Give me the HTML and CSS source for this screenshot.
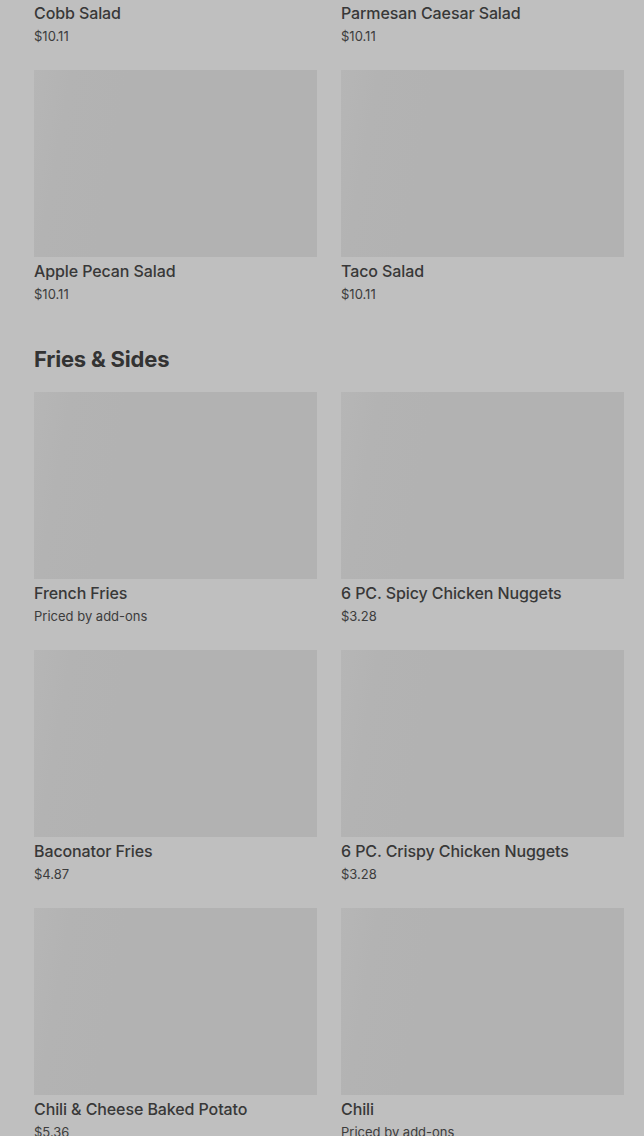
FILE: index.html
```html
<!DOCTYPE html>
<html>
  <head>
    <title>Menu</title>
    <meta charset="UTF-8">
    <meta name="viewport" content="width=device-width, initial-scale=1.0">
    <link rel="stylesheet" href="styles.css">
  </head>
  <body>
    <div id="menu">
      <section class="category">
        <div class="items">
          <div class="item">
            <div class="photo"></div>
            <div class="name">Cobb Salad</div>
            <div class="price">$10.11</div>
          </div>
          <div class="item">
            <div class="photo"></div>
            <div class="name">Parmesan Caesar Salad</div>
            <div class="price">$10.11</div>
          </div>
          <div class="item">
            <div class="photo"></div>
            <div class="name">Apple Pecan Salad</div>
            <div class="price">$10.11</div>
          </div>
          <div class="item">
            <div class="photo"></div>
            <div class="name">Taco Salad</div>
            <div class="price">$10.11</div>
          </div>
        </div>
      </section>

      <section class="category">
        <h2 class="category-title">Fries &amp; Sides</h2>
        <div class="items">
          <div class="item">
            <div class="photo"></div>
            <div class="name">French Fries</div>
            <div class="price">Priced by add-ons</div>
          </div>
          <div class="item">
            <div class="photo"></div>
            <div class="name">6 PC. Spicy Chicken Nuggets</div>
            <div class="price">$3.28</div>
          </div>
          <div class="item">
            <div class="photo"></div>
            <div class="name">Baconator Fries</div>
            <div class="price">$4.87</div>
          </div>
          <div class="item">
            <div class="photo"></div>
            <div class="name">6 PC. Crispy Chicken Nuggets</div>
            <div class="price">$3.28</div>
          </div>
          <div class="item">
            <div class="photo"></div>
            <div class="name">Chili &amp; Cheese Baked Potato</div>
            <div class="price">$5.36</div>
          </div>
          <div class="item">
            <div class="photo"></div>
            <div class="name">Chili</div>
            <div class="price">Priced by add-ons</div>
          </div>
        </div>
      </section>
    </div>
  </body>
</html>
```

FILE: styles.css
```css
* {
  box-sizing: border-box;
}

html, body {
  margin: 0;
  height: 100%;
  overflow: hidden;
  font-family: Inter, "Noto Sans", sans-serif;
  background-color: #bfbfbf;
  color: #363636;
}

/* page is scrolled: the salad row above is cut off */
#menu {
  margin-top: -188px;
  padding: 0 20px 0 34px;
}

.category + .category {
  margin-top: 41px;
}

.category-title {
  margin: 0 0 19px 0;
  font-size: 22px;
  line-height: 28px;
  font-weight: 700;
  letter-spacing: -0.2px;
  color: #333;
}

.items {
  display: grid;
  grid-template-columns: 283px 283px;
  column-gap: 24px;
  row-gap: 24px;
}

.photo {
  height: 187px;
  background-color: #b2b2b2;
  background-image: linear-gradient(100deg, #b6b6b6 0%, #b3b3b3 12%, #b2b2b2 30%);
}

.name {
  margin-top: 2px;
  font-size: 16px;
  line-height: 24px;
  font-weight: 500;
  letter-spacing: -0.1px;
  color: #383838;
}

.price {
  margin-top: 1px;
  font-size: 13px;
  line-height: 20px;
  color: #3c3c3c;
}
```
